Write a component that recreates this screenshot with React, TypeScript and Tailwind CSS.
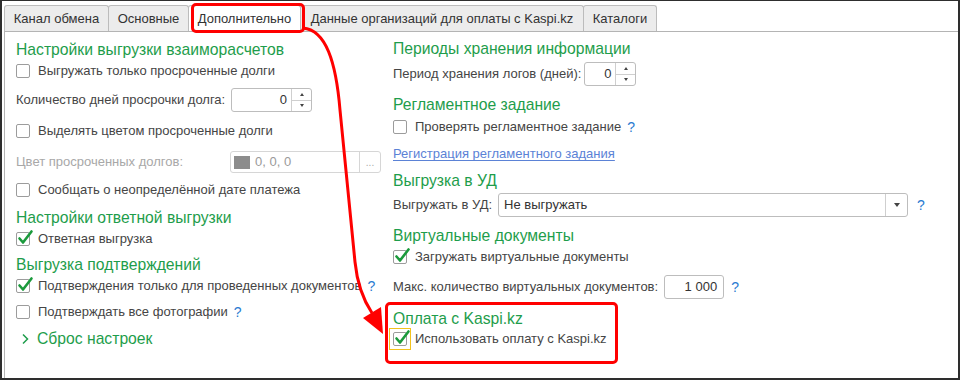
import React from "react";

const green = "text-[#1e9d4b]";

function Check({ checked = false, focus = false }: { checked?: boolean; focus?: boolean }) {
  const box = (
    <span className="relative inline-block h-[14px] w-[14px] shrink-0 rounded-[2px] border border-[#9c9c9c] bg-white">
      {checked && (
        <svg className="absolute -top-[4px] left-[0px] h-[17px] w-[17px]" viewBox="0 0 17 17">
          <path d="M2.5 9.5 L6 13.5 L14.5 2.5" fill="none" stroke="#1b9a3c" strokeWidth="2.6" strokeLinecap="round" strokeLinejoin="round" />
        </svg>
      )}
    </span>
  );
  if (focus) {
    return (
      <span className="-ml-[4px] -mr-[4px] flex h-[22px] w-[22px] shrink-0 items-center justify-center border border-[#f2c21c]">
        {box}
      </span>
    );
  }
  return box;
}

function CheckRow({ label, checked, help, focus, className = "" }: { label: string; checked?: boolean; help?: boolean; focus?: boolean; className?: string }) {
  return (
    <div className={`flex h-[20px] items-center gap-[8px] ${className}`}>
      <Check checked={checked} focus={focus} />
      <span>{label}</span>
      {help && <Help />}
    </div>
  );
}

function Help() {
  return <span className="ml-[-2px] text-[14px] text-[#2a7bd1]">?</span>;
}

function Heading({ children, className = "" }: { children: React.ReactNode; className?: string }) {
  return <div className={`flex h-[20px] items-center text-[15.7px] ${green} ${className}`}>{children}</div>;
}

function Spin({ value, width }: { value: string; width: string }) {
  return (
    <div className={`flex h-[24px] ${width} rounded-[3px] border border-[#bdbdbd] bg-white`}>
      <div className="flex flex-1 items-center justify-end pr-[4px] text-[#333]">{value}</div>
      <div className="flex w-[20px] flex-col border-l border-[#cfcfcf]">
        <div className="flex flex-1 items-center justify-center border-b border-[#cfcfcf]">
          <span className="h-0 w-0 border-x-[2px] border-b-[3px] border-x-transparent border-b-[#444]" />
        </div>
        <div className="flex flex-1 items-center justify-center">
          <span className="h-0 w-0 border-x-[2px] border-t-[3px] border-x-transparent border-t-[#444]" />
        </div>
      </div>
    </div>
  );
}

export default function App() {
  const tabs = [
    { label: "Канал обмена", w: "w-[105px]" },
    { label: "Основные", w: "w-[81px]" },
    { label: "Дополнительно", w: "w-[113px]", active: true },
    { label: "Данные организаций для оплаты с Kaspi.kz", w: "w-[284px]" },
    { label: "Каталоги", w: "w-[74px]" },
  ];

  return (
    <div className="relative flex h-[380px] w-[960px] flex-col border-x-2 border-t border-b-2 border-[#2e2e2e] bg-white font-['Liberation_Sans',Arial,sans-serif] text-[13px] text-[#454545]">
      <div className="flex pl-[2px] pt-[4px]">
        {tabs.map((t) => (
          <div
            key={t.label}
            className={`flex h-[26px] ${t.w} -mr-px items-center justify-center rounded-t-[3px] border border-b-0 border-[#bcbcbc] ${
              t.active ? "bg-white" : "bg-[#ececec]"
            } text-[#333]`}
          >
            {t.label}
          </div>
        ))}
      </div>

      <div className="ml-[2px] flex flex-1 border-l border-t border-[#b4b4b4]">
        {/* left column */}
        <div className="flex w-[388px] flex-col pl-[11px] pt-[8px]">
          <Heading>Настройки выгрузки взаиморасчетов</Heading>
          <CheckRow className="mt-[1px]" label="Выгружать только просроченные долги" />
          <div className="mt-[7px] flex h-[24px] items-center">
            <span className="w-[215px]">Количество дней просрочки долга:</span>
            <Spin value="0" width="w-[81px]" />
          </div>
          <CheckRow className="mt-[9px]" label="Выделять цветом просроченные долги" />
          <div className="mt-[10px] flex h-[22px] items-center">
            <span className="w-[214px] text-[#a8a8a8]">Цвет просроченных долгов:</span>
            <div className="flex h-[22px] w-[151px] rounded-[3px] border border-[#d6d6d6] bg-white">
              <div className="flex flex-1 items-center gap-[5px] pl-[3px] text-[#9a9a9a]">
                <span className="h-[13px] w-[16px] bg-[#8c8c8c]" />
                <span>0, 0, 0</span>
              </div>
              <div className="flex w-[21px] items-center justify-center border-l border-[#d6d6d6] text-[10px] text-[#aaa]">...</div>
            </div>
          </div>
          <CheckRow className="mt-[7px]" label="Сообщать о неопределённой дате платежа" />
          <Heading className="mt-[8px]">Настройки ответной выгрузки</Heading>
          <CheckRow className="mt-[1px]" label="Ответная выгрузка" checked />
          <Heading className="mt-[6px]">Выгрузка подтверждений</Heading>
          <CheckRow className="mt-[1px]" label="Подтверждения только для проведенных документов" checked help />
          <CheckRow className="mt-[6px]" label="Подтверждать все фотографии" help />
          <div className={`mt-[7px] flex h-[20px] items-center gap-[7px] pl-[5px] text-[15.7px] ${green}`}>
            <svg width="9" height="12" viewBox="0 0 9 12">
              <path d="M2 1.5 L6.5 6 L2 10.5" fill="none" stroke="#1e9d4b" strokeWidth="1.5" />
            </svg>
            <span>Сброс настроек</span>
          </div>
        </div>

        {/* right column */}
        <div className="flex flex-col pt-[7px]">
          <Heading>Периоды хранения информации</Heading>
          <div className="mt-[3px] flex h-[24px] items-center gap-[3px]">
            <span>Период хранения логов (дней):</span>
            <Spin value="0" width="w-[52px]" />
          </div>
          <Heading className="mt-[9px]">Регламентное задание</Heading>
          <CheckRow className="mt-[2px]" label="Проверять регламентное задание" help />
          <div className="mt-[7px] flex h-[20px] items-center">
            <span className="text-[#5b82d6] underline underline-offset-2">Регистрация регламентного задания</span>
          </div>
          <Heading className="mt-[7px]">Выгрузка в УД</Heading>
          <div className="mt-[2px] flex h-[24px] items-center gap-[6px]">
            <span>Выгружать в УД:</span>
            <div className="flex h-[24px] w-[410px] rounded-[3px] border border-[#bdbdbd] bg-white">
              <div className="flex flex-1 items-center pl-[5px] text-[#333]">Не выгружать</div>
              <div className="flex w-[22px] items-center justify-center border-l border-[#cfcfcf]">
                <span className="h-0 w-0 border-x-[3px] border-t-[4px] border-x-transparent border-t-[#444]" />
              </div>
            </div>
            <span className="ml-[3px] text-[14px] text-[#2a7bd1]">?</span>
          </div>
          <Heading className="mt-[9px]">Виртуальные документы</Heading>
          <CheckRow className="mt-[1px]" label="Загружать виртуальные документы" checked />
          <div className="mt-[8px] flex h-[24px] items-center gap-[6px]">
            <span>Макс. количество виртуальных документов:</span>
            <div className="flex h-[24px] w-[60px] items-center justify-end rounded-[3px] border border-[#bdbdbd] bg-white pr-[6px] text-[#333]">
              1 000
            </div>
            <span className="ml-[1px] text-[14px] text-[#2a7bd1]">?</span>
          </div>
          <div className="-ml-[8px] mt-[3px] flex h-[62px] w-[233px] flex-col rounded-[5px] border-[3px] border-[#ff0000] pl-[5px] pt-[4px]">
            <Heading>Оплата с Kaspi.kz</Heading>
            <CheckRow className="gap-[6px]" label="Использовать оплату с Kaspi.kz" checked focus />
          </div>
        </div>
      </div>

      {/* annotation: red frame round the active tab and arrow */}
      <div className="pointer-events-none absolute left-[189px] top-[2px] h-[30px] w-[114px] rounded-[5px] border-[3px] border-[#ff0000]" />
      <svg className="pointer-events-none absolute -left-[2px] -top-[1px]" width="960" height="380" viewBox="0 0 960 380">
        <path d="M303 28 C 326 30, 336 62, 340 110 L 355 262 Q 358 292 372 313" fill="none" stroke="#ff0000" strokeWidth="3" />
        <path d="M383 334 L381 307 L363 318 Z" fill="#ff0000" />
      </svg>
    </div>
  );
}
